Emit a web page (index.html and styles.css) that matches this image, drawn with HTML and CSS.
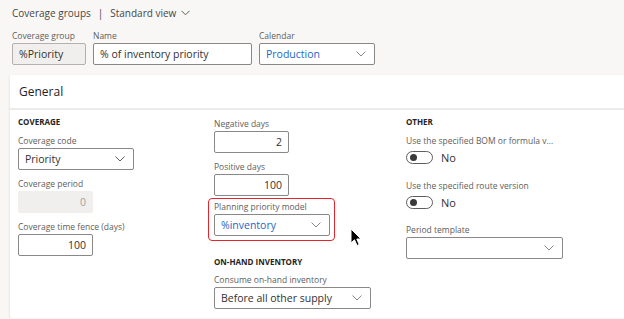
FILE: index.html
```html
<!DOCTYPE html>
<html lang="en">
<head>
    <meta charset="UTF-8">
    <title>Coverage groups</title>
    <link rel="stylesheet" href="styles.css">
</head>
<body>
    <div class="page">
        <div class="breadcrumb">
            <span>Coverage groups</span>
            <span class="sep">|</span>
            <span>Standard view</span>
            <svg class="bc-chevron" width="9" height="6" viewBox="0 0 9 6"><path d="M0.5 0.8 L4.5 4.8 L8.5 0.8" fill="none" stroke="#605e5c" stroke-width="1"/></svg>
        </div>

        <div class="header-fields">
            <div class="field">
                <label>Coverage group</label>
                <div class="control readonly w-group">%Priority</div>
            </div>
            <div class="field">
                <label>Name</label>
                <div class="control w-name">% of inventory priority</div>
            </div>
            <div class="field">
                <label>Calendar</label>
                <div class="control select link w-calendar">Production<svg class="chevron" width="10" height="6" viewBox="0 0 10 6"><path d="M0.5 0.5 L5 5 L9.5 0.5" fill="none" stroke="#8a8886" stroke-width="1"/></svg></div>
            </div>
        </div>

        <div class="card">
            <div class="card-header">General</div>
            <div class="card-body">
                <!-- Coverage -->
                <div class="column">
                    <div class="group-title">COVERAGE</div>
                    <div class="field">
                        <label>Coverage code</label>
                        <div class="control select w-select">Priority<svg class="chevron" width="10" height="6" viewBox="0 0 10 6"><path d="M0.5 0.5 L5 5 L9.5 0.5" fill="none" stroke="#605e5c" stroke-width="1"/></svg></div>
                    </div>
                    <div class="field">
                        <label>Coverage period</label>
                        <div class="control disabled number w-num">0</div>
                    </div>
                    <div class="field">
                        <label>Coverage time fence (days)</label>
                        <div class="control number w-num">100</div>
                    </div>
                </div>

                <!-- Days / priority / on-hand -->
                <div class="column col-days">
                    <div class="field first">
                        <label>Negative days</label>
                        <div class="control number w-num">2</div>
                    </div>
                    <div class="field">
                        <label>Positive days</label>
                        <div class="control number w-num">100</div>
                    </div>
                    <div class="highlight">
                        <label>Planning priority model</label>
                        <div class="control select link w-select">%inventory<svg class="chevron" width="10" height="6" viewBox="0 0 10 6"><path d="M0.5 0.5 L5 5 L9.5 0.5" fill="none" stroke="#8a8886" stroke-width="1"/></svg></div>
                    </div>
                    <div class="group-title onhand">ON-HAND INVENTORY</div>
                    <div class="field tight">
                        <label>Consume on-hand inventory</label>
                        <div class="control select w-wide">Before all other supply<svg class="chevron" width="10" height="6" viewBox="0 0 10 6"><path d="M0.5 0.5 L5 5 L9.5 0.5" fill="none" stroke="#8a8886" stroke-width="1"/></svg></div>
                    </div>
                </div>

                <!-- Other -->
                <div class="column">
                    <div class="group-title">OTHER</div>
                    <div class="field">
                        <label>Use the specified BOM or formula v...</label>
                        <div class="toggle-row"><span class="toggle"></span><span>No</span></div>
                    </div>
                    <div class="field spaced">
                        <label>Use the specified route version</label>
                        <div class="toggle-row"><span class="toggle"></span><span>No</span></div>
                    </div>
                    <div class="field spaced-sm">
                        <label>Period template</label>
                        <div class="control select w-wide"><svg class="chevron" width="10" height="6" viewBox="0 0 10 6"><path d="M0.5 0.5 L5 5 L9.5 0.5" fill="none" stroke="#8a8886" stroke-width="1"/></svg></div>
                    </div>
                </div>
            </div>
        </div>
    </div>

    <svg class="cursor" width="12" height="19" viewBox="0 0 12 19">
        <path d="M1 1 L1 15 L4.5 11.8 L7 17.5 L9.2 16.5 L6.8 11 L11 11 Z" fill="#000" stroke="#fff" stroke-width="1"/>
    </svg>
</body>
</html>
```

FILE: styles.css
```css
:root {
    --text-color: #323130;
    --label-color: #605e5c;
    --border-color: #8a8886;
    --link-color: #2266c8;
    --page-bg: #f8f7f6;
    --disabled-bg: #f0efee;
    --highlight: #e3242b;
}

body {
    margin: 0;
    font-family: 'Open Sans', 'Noto Sans', sans-serif;
    color: var(--text-color);
    background-color: var(--page-bg);
    overflow: hidden;
}

.page {
    position: relative;
    padding: 5px 0 0 10px;
}

.breadcrumb {
    display: flex;
    align-items: center;
    gap: 6px;
    padding-left: 2px;
    height: 16px;
    font-size: 10px;
    color: #484644;
}

.breadcrumb .sep {
    margin: 0 1px;
}

.bc-chevron {
    margin-left: -1px;
}

.header-fields {
    display: flex;
    gap: 7px;
    padding-left: 2px;
    margin-top: 9px;
}

.field {
    display: flex;
    flex-direction: column;
    margin-top: 8px;
}

.header-fields .field {
    margin-top: 0;
}

label {
    font-size: 8.5px;
    line-height: 12px;
    color: var(--label-color);
    margin-bottom: 1px;
    white-space: nowrap;
}

.control {
    position: relative;
    box-sizing: border-box;
    height: 22px;
    border: 1px solid var(--border-color);
    border-radius: 2px;
    background: white;
    font-size: 10.5px;
    line-height: 20px;
    padding: 0 6px;
    white-space: nowrap;
    overflow: hidden;
}

.control.readonly {
    background: var(--disabled-bg);
    border-color: #b3b0ad;
}

.control.disabled {
    background: var(--disabled-bg);
    border-color: var(--disabled-bg);
    color: #a19f9d;
}

.control.number {
    text-align: right;
}

.control.link {
    color: var(--link-color);
}

.chevron {
    position: absolute;
    right: 8px;
    top: 7px;
}

.w-group { width: 74px; }
.w-name { width: 159px; }
.w-calendar { width: 116px; }
.w-select { width: 116px; }
.w-num { width: 75px; }
.w-wide { width: 157px; }

.card {
    margin-top: 10px;
    width: 640px;
    height: 243px;
    background: white;
    border-radius: 2px;
    box-shadow: 0 1px 3px rgba(0, 0, 0, 0.12);
}

.card-header {
    height: 33px;
    padding-left: 9px;
    font-size: 12px;
    line-height: 34px;
    font-weight: 500;
    color: #252423;
    border-bottom: 2px solid #ecebe9;
}

.card-body {
    display: grid;
    grid-template-columns: 194px 194px 1fr;
    padding: 6px 0 0 8px;
}

.column {
    display: flex;
    flex-direction: column;
}

.group-title {
    font-size: 8px;
    line-height: 12px;
    font-weight: 700;
    color: #252423;
}

.group-title + .field {
    margin-top: 7px;
}

.col-days {
    padding-left: 2px;
}

.field.first {
    margin-top: 2px;
}

.highlight {
    display: flex;
    flex-direction: column;
    width: 117px;
    margin: 2px 0 0 -6px;
    padding: 2px 3px 4px 5px;
    border: 1.5px solid var(--highlight);
    border-radius: 4px;
}

.group-title.onhand {
    margin-top: 15px;
}

.field.tight {
    margin-top: 6px;
}

.toggle-row {
    display: flex;
    align-items: center;
    gap: 8px;
    height: 18px;
    font-size: 11px;
    margin-top: 0;
}

.toggle {
    position: relative;
    box-sizing: border-box;
    width: 27px;
    height: 13px;
    border: 1px solid #605e5c;
    border-radius: 7px;
}

.toggle::after {
    content: '';
    position: absolute;
    left: 3px;
    top: 2px;
    width: 7px;
    height: 7px;
    border-radius: 50%;
    background: #3b3a39;
}

.field.spaced {
    margin-top: 14px;
}

.field.spaced-sm {
    margin-top: 13px;
}

.cursor {
    position: absolute;
    left: 350px;
    top: 228px;
}
```
